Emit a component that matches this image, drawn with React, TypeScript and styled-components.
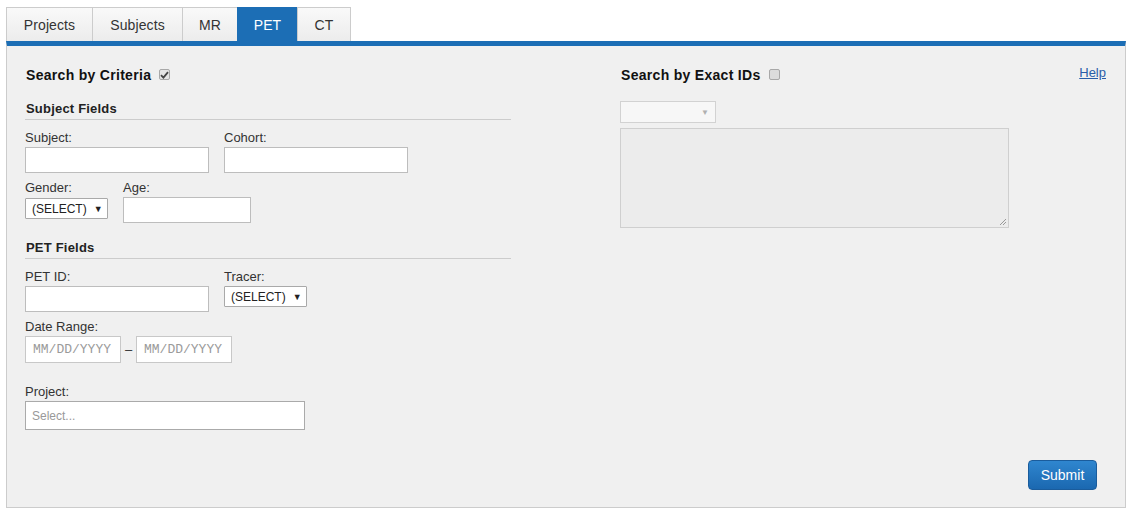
import React from "react";
import styled, { createGlobalStyle } from "styled-components";

const Global = createGlobalStyle`
  html, body { margin: 0; padding: 0; background: #ffffff; }
  body { font-family: "Liberation Sans", Arial, sans-serif; color: #333; }
  * { box-sizing: border-box; }
`;

const Page = styled.div`
  padding: 7px 0 0 6px;
  width: 1126px;
`;

const TabBar = styled.div`
  display: flex;
  height: 34px;
`;

const Tab = styled.div<{ $active?: boolean; $last?: boolean; $w: number }>`
  display: flex;
  align-items: center;
  justify-content: center;
  width: ${(p) => p.$w}px;
  font-size: 14px;
  letter-spacing: 0.1px;
  border: 1px solid ${(p) => (p.$active ? "#1c6eb5" : "#cccccc")};
  border-right: ${(p) => (p.$last ? "1px solid #cccccc" : "none")};
  border-bottom: none;
  color: ${(p) => (p.$active ? "#ffffff" : "#333333")};
  background: ${(p) =>
    p.$active ? "#1c6eb5" : "linear-gradient(#f9f9f9, #ececec)"};
`;

const Panel = styled.div`
  width: 1120px;
  height: 467px;
  border: 1px solid #cccccc;
  border-top: 5px solid #1c6eb5;
  background: #f0f0f0;
  padding: 19px 19px 17px 18px;
  display: flex;
  flex-direction: column;
`;

const Columns = styled.div`
  display: grid;
  grid-template-columns: 486px 486px;
  column-gap: 109px;
`;

const Column = styled.div`
  display: flex;
  flex-direction: column;
`;

const HeaderRow = styled.div`
  display: flex;
  align-items: center;
  height: 20px;
`;

const Title = styled.span`
  font-size: 14px;
  font-weight: bold;
  letter-spacing: 0.3px;
  color: #111;
  line-height: 20px;
  padding-left: 1px;
`;

const Check = styled.span<{ $checked?: boolean }>`
  display: inline-flex;
  align-items: center;
  justify-content: center;
  width: 11px;
  height: 11px;
  margin-left: 8px;
  border: 1px solid #a8a8a8;
  border-radius: 2px;
  background: ${(p) => (p.$checked ? "#e4e4e4" : "#dcdcdc")};
  margin-top: -1px;
`;

const Help = styled.a`
  margin-left: auto;
  align-self: flex-start;
  font-size: 13px;
  line-height: 15px;
  color: #2a5ca8;
  text-decoration: underline;
`;

const SectionHeading = styled.div<{ $mt: number }>`
  margin-top: ${(p) => p.$mt}px;
  font-size: 13px;
  font-weight: bold;
  letter-spacing: 0.2px;
  line-height: 15px;
  padding: 0 0 3px 1px;
  border-bottom: 1px solid #cccccc;
  color: #222;
`;

const Row = styled.div<{ $mt: number }>`
  display: flex;
  margin-top: ${(p) => p.$mt}px;
  align-items: flex-start;
`;

const Field = styled.div<{ $w: number }>`
  display: flex;
  flex-direction: column;
  width: ${(p) => p.$w}px;
`;

const Label = styled.label`
  font-size: 13px;
  line-height: 15px;
  color: #333;
  height: 15px;
`;

const TextInput = styled.div<{ $w: number; $h: number; $mt?: number }>`
  width: ${(p) => p.$w}px;
  height: ${(p) => p.$h}px;
  margin-top: ${(p) => p.$mt ?? 2}px;
  background: #ffffff;
  border: 1px solid #bdbdbd;
`;

const SelectBox = styled.div<{ $mt?: number }>`
  display: flex;
  align-items: center;
  width: 83px;
  height: 21px;
  margin-top: ${(p) => p.$mt ?? 2}px;
  background: #ffffff;
  border: 1px solid #a9a9a9;
  border-radius: 1px;
  padding-left: 6px;
  font-size: 12px;
  color: #222;
  gap: 7px;
`;

const Arrow = styled.span`
  font-size: 9px;
  color: #222;
`;

const DateRow = styled.div`
  display: flex;
  align-items: center;
  margin-top: 2px;
`;

const DateInput = styled.div`
  width: 96px;
  height: 27px;
  background: #ffffff;
  border: 1px solid #c8c8c8;
  display: flex;
  align-items: center;
  padding-left: 7px;
  font-family: "Liberation Mono", "Courier New", monospace;
  font-size: 13px;
  color: #9a9a9a;
  white-space: nowrap;
  overflow: hidden;
`;

const Dash = styled.span`
  width: 15px;
  text-align: center;
  font-size: 13px;
  color: #333;
`;

const ProjectSelect = styled.div`
  width: 280px;
  height: 29px;
  margin-top: 2px;
  background: #ffffff;
  border: 1px solid #aaaaaa;
  display: flex;
  align-items: center;
  padding-left: 6px;
  font-size: 12px;
  color: #999;
`;

const IdDropdown = styled.div`
  width: 96px;
  height: 22px;
  margin-top: 16px;
  background: #f7f7f7;
  border: 1px solid #d2d2d2;
  display: flex;
  align-items: center;
  justify-content: flex-end;
  padding-right: 6px;
  font-size: 8px;
  color: #b0b0b0;
`;

const IdTextArea = styled.div`
  position: relative;
  width: 389px;
  height: 100px;
  margin-top: 5px;
  background: #ececec;
  border: 1px solid #cfcfcf;
`;

const Grip = styled.svg`
  position: absolute;
  right: 1px;
  bottom: 1px;
`;

const Footer = styled.div`
  margin-top: auto;
  display: flex;
  justify-content: flex-end;
  padding-right: 9px;
`;

const SubmitButton = styled.button`
  width: 69px;
  height: 30px;
  border: 1px solid #1a5c9c;
  border-radius: 4px;
  background: linear-gradient(#2f86cf, #1b68b0);
  color: #ffffff;
  font-family: "Liberation Sans", Arial, sans-serif;
  font-size: 14px;
  padding: 0;
`;

const CheckMark = () => (
  <svg width="9" height="8" viewBox="0 0 9 8">
    <path d="M1 4.2 L3.4 6.6 L8 1.2" fill="none" stroke="#444" strokeWidth="1.8" />
  </svg>
);

export default function App() {
  return (
    <>
      <Global />
      <Page>
        <TabBar>
          <Tab $w={86}>Projects</Tab>
          <Tab $w={90}>Subjects</Tab>
          <Tab $w={55}>MR</Tab>
          <Tab $w={60} $active>PET</Tab>
          <Tab $w={54} $last>CT</Tab>
        </TabBar>
        <Panel>
          <Columns>
            <Column>
              <HeaderRow>
                <Title>Search by Criteria</Title>
                <Check $checked>
                  <CheckMark />
                </Check>
              </HeaderRow>
              <SectionHeading $mt={16}>Subject Fields</SectionHeading>
              <Row $mt={10}>
                <Field $w={199}>
                  <Label>Subject:</Label>
                  <TextInput $w={184} $h={26} />
                </Field>
                <Field $w={184}>
                  <Label>Cohort:</Label>
                  <TextInput $w={184} $h={26} />
                </Field>
              </Row>
              <Row $mt={7}>
                <Field $w={98}>
                  <Label>Gender:</Label>
                  <SelectBox $mt={3}>
                    (SELECT) <Arrow>▼</Arrow>
                  </SelectBox>
                </Field>
                <Field $w={128}>
                  <Label>Age:</Label>
                  <TextInput $w={128} $h={26} />
                </Field>
              </Row>
              <SectionHeading $mt={17}>PET Fields</SectionHeading>
              <Row $mt={10}>
                <Field $w={199}>
                  <Label>PET ID:</Label>
                  <TextInput $w={184} $h={26} />
                </Field>
                <Field $w={184}>
                  <Label>Tracer:</Label>
                  <SelectBox>
                    (SELECT) <Arrow>▼</Arrow>
                  </SelectBox>
                </Field>
              </Row>
              <Row $mt={7}>
                <Field $w={300}>
                  <Label>Date Range:</Label>
                  <DateRow>
                    <DateInput>MM/DD/YYYY</DateInput>
                    <Dash>–</Dash>
                    <DateInput>MM/DD/YYYY</DateInput>
                  </DateRow>
                </Field>
              </Row>
              <Row $mt={21}>
                <Field $w={300}>
                  <Label>Project:</Label>
                  <ProjectSelect>Select...</ProjectSelect>
                </Field>
              </Row>
            </Column>
            <Column>
              <HeaderRow>
                <Title>Search by Exact IDs</Title>
                <Check />
                <Help href="#">Help</Help>
              </HeaderRow>
              <IdDropdown>▼</IdDropdown>
              <IdTextArea>
                <Grip width="8" height="8" viewBox="0 0 8 8">
                  <path d="M7 1 L1 7 M7 4 L4 7" stroke="#999" strokeWidth="1" />
                </Grip>
              </IdTextArea>
            </Column>
          </Columns>
          <Footer>
            <SubmitButton>Submit</SubmitButton>
          </Footer>
        </Panel>
      </Page>
    </>
  );
}
